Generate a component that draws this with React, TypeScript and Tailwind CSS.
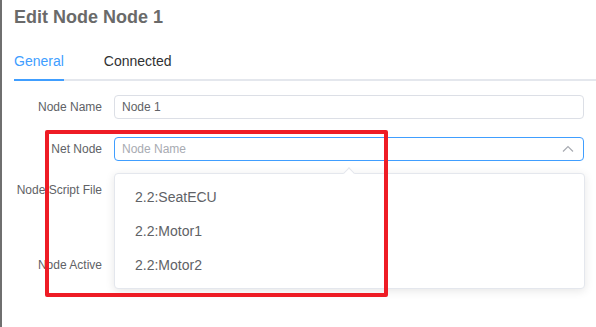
import React from 'react';

const font = { fontFamily: '"Liberation Sans", Arial, sans-serif' };

function Label({ children }: { children: React.ReactNode }) {
  return (
    <div className="w-[100px] shrink-0 pr-[12px] text-right text-[12px] leading-[24px] text-[#606266] whitespace-nowrap">
      {children}
    </div>
  );
}

function ChevronUp() {
  return (
    <svg width="12" height="8" viewBox="0 0 12 8" fill="none">
      <path d="M1 6.5 L6 1.5 L11 6.5" stroke="#a8abb2" strokeWidth="1.2" />
    </svg>
  );
}

export default function App() {
  const options = ['2.2:SeatECU', '2.2:Motor1', '2.2:Motor2'];
  return (
    <div className="relative flex h-[327px] w-[596px] overflow-hidden bg-white" style={font}>
      <div className="w-[2px] shrink-0 bg-[#6f6f6f]" />
      <div className="flex flex-1 flex-col pl-[12px]">
        <h1 className="mt-[5px] text-[18px] font-bold leading-[24px] text-[#6a6a6a]">Edit Node Node 1</h1>

        {/* tabs */}
        <div className="mt-[22px] flex border-b-2 border-[#e4e7ed]">
          <div className="relative pb-[8px] text-[14px] leading-[20px] text-[#409eff]">
            General
            <div className="absolute -bottom-[2px] left-0 right-0 h-[2px] bg-[#409eff]" />
          </div>
          <div className="ml-[40px] pb-[8px] text-[14px] leading-[20px] text-[#303133]">Connected</div>
        </div>

        {/* form */}
        <div className="mt-[14px] flex flex-col">
          <div className="flex items-center">
            <Label>Node Name</Label>
            <div className="flex h-[24px] w-[470px] items-center rounded-[4px] border border-[#dcdfe6] px-[7px] text-[12px] text-[#606266]">
              Node 1
            </div>
          </div>

          <div className="relative mt-[18px] flex items-center">
            <Label>Net Node</Label>
            <div className="flex h-[24px] w-[470px] items-center justify-between rounded-[4px] border border-[#409eff] pl-[7px] pr-[9px] text-[12px] text-[#a8abb2]">
              <span>Node Name</span>
              <ChevronUp />
            </div>

            {/* dropdown */}
            <div className="absolute left-[100px] top-[36px] z-10 w-[471px] rounded-[4px] border border-[#e4e7ed] bg-white py-[6px] shadow-[0_2px_10px_rgba(0,0,0,0.1)]">
              <div className="absolute -top-[5px] left-[230px] h-[8px] w-[8px] rotate-45 border-l border-t border-[#e4e7ed] bg-white" />
              {options.map((o) => (
                <div key={o} className="flex h-[34px] items-center pl-[20px] text-[14px] text-[#606266]">
                  {o}
                </div>
              ))}
            </div>
          </div>

          <div className="mt-[17px] flex items-center">
            <Label>Node Script File</Label>
          </div>

          <div className="mt-[51px] flex items-center">
            <Label>Node Active</Label>
          </div>
        </div>
      </div>

      {/* annotation */}
      <div className="absolute left-[45px] top-[130px] z-20 h-[167px] w-[343px] rounded-[2px] border-[4px] border-[#ee1c25]" />
    </div>
  );
}
